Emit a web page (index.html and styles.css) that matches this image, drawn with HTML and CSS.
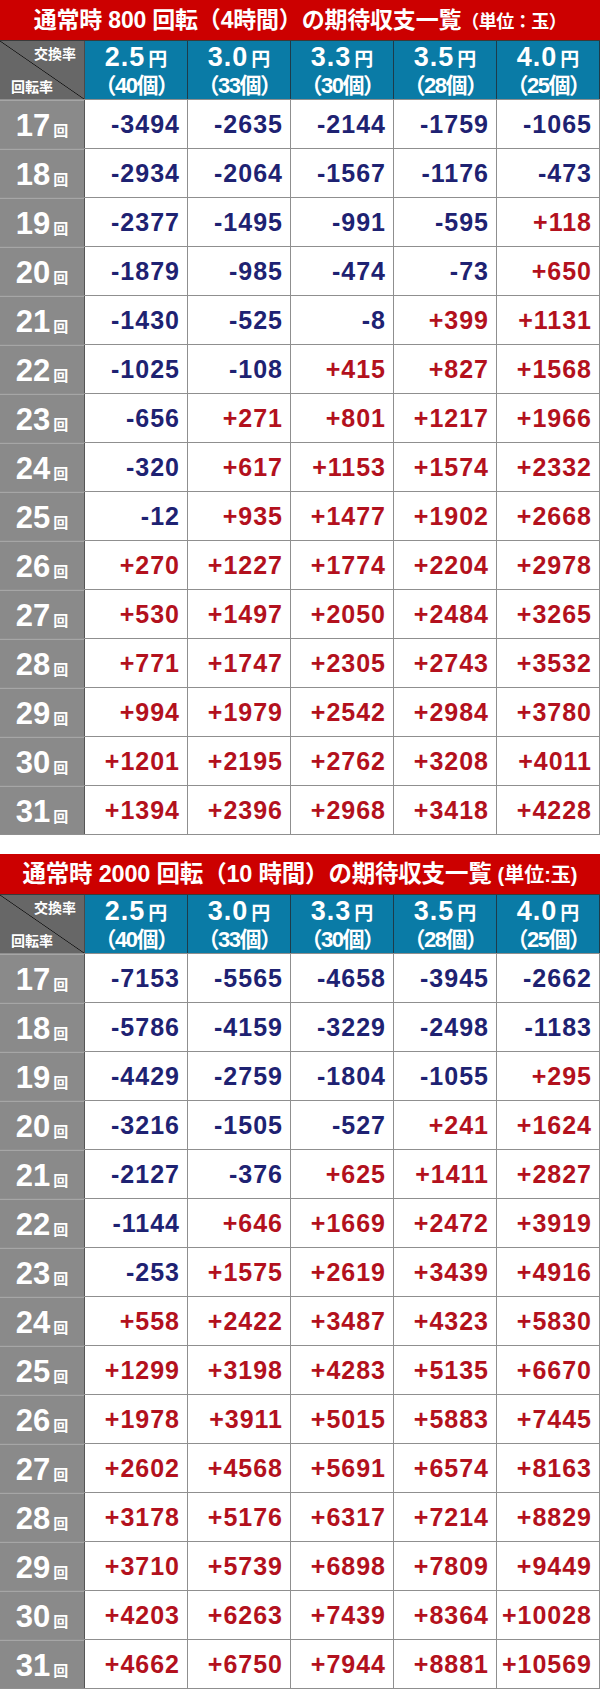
FILE: index.html
```html
<!DOCTYPE html>
<html lang="ja">
<head>
<meta charset="utf-8">
<title>期待収支一覧</title>
<link rel="stylesheet" href="styles.css">
</head>
<body>
<section class="sheet">
  <h2 class="title">通常時 800 回転（4時間）の期待収支一覧<span class="unit">（単位：玉）</span></h2>
  <div class="grid">
    <div class="corner"><span class="c-top">交換率</span><span class="c-bot">回転率</span></div>
    <div class="rate"><div class="r1">2.5<span class="yen">円</span></div><div class="r2">（40個）</div></div>
    <div class="rate"><div class="r1">3.0<span class="yen">円</span></div><div class="r2">（33個）</div></div>
    <div class="rate"><div class="r1">3.3<span class="yen">円</span></div><div class="r2">（30個）</div></div>
    <div class="rate"><div class="r1">3.5<span class="yen">円</span></div><div class="r2">（28個）</div></div>
    <div class="rate"><div class="r1">4.0<span class="yen">円</span></div><div class="r2">（25個）</div></div>

    <div class="rot">17<span class="kai">回</span></div><div class="v neg">-3494</div><div class="v neg">-2635</div><div class="v neg">-2144</div><div class="v neg">-1759</div><div class="v neg">-1065</div>
    <div class="rot">18<span class="kai">回</span></div><div class="v neg">-2934</div><div class="v neg">-2064</div><div class="v neg">-1567</div><div class="v neg">-1176</div><div class="v neg">-473</div>
    <div class="rot">19<span class="kai">回</span></div><div class="v neg">-2377</div><div class="v neg">-1495</div><div class="v neg">-991</div><div class="v neg">-595</div><div class="v pos">+118</div>
    <div class="rot">20<span class="kai">回</span></div><div class="v neg">-1879</div><div class="v neg">-985</div><div class="v neg">-474</div><div class="v neg">-73</div><div class="v pos">+650</div>
    <div class="rot">21<span class="kai">回</span></div><div class="v neg">-1430</div><div class="v neg">-525</div><div class="v neg">-8</div><div class="v pos">+399</div><div class="v pos">+1131</div>
    <div class="rot">22<span class="kai">回</span></div><div class="v neg">-1025</div><div class="v neg">-108</div><div class="v pos">+415</div><div class="v pos">+827</div><div class="v pos">+1568</div>
    <div class="rot">23<span class="kai">回</span></div><div class="v neg">-656</div><div class="v pos">+271</div><div class="v pos">+801</div><div class="v pos">+1217</div><div class="v pos">+1966</div>
    <div class="rot">24<span class="kai">回</span></div><div class="v neg">-320</div><div class="v pos">+617</div><div class="v pos">+1153</div><div class="v pos">+1574</div><div class="v pos">+2332</div>
    <div class="rot">25<span class="kai">回</span></div><div class="v neg">-12</div><div class="v pos">+935</div><div class="v pos">+1477</div><div class="v pos">+1902</div><div class="v pos">+2668</div>
    <div class="rot">26<span class="kai">回</span></div><div class="v pos">+270</div><div class="v pos">+1227</div><div class="v pos">+1774</div><div class="v pos">+2204</div><div class="v pos">+2978</div>
    <div class="rot">27<span class="kai">回</span></div><div class="v pos">+530</div><div class="v pos">+1497</div><div class="v pos">+2050</div><div class="v pos">+2484</div><div class="v pos">+3265</div>
    <div class="rot">28<span class="kai">回</span></div><div class="v pos">+771</div><div class="v pos">+1747</div><div class="v pos">+2305</div><div class="v pos">+2743</div><div class="v pos">+3532</div>
    <div class="rot">29<span class="kai">回</span></div><div class="v pos">+994</div><div class="v pos">+1979</div><div class="v pos">+2542</div><div class="v pos">+2984</div><div class="v pos">+3780</div>
    <div class="rot">30<span class="kai">回</span></div><div class="v pos">+1201</div><div class="v pos">+2195</div><div class="v pos">+2762</div><div class="v pos">+3208</div><div class="v pos">+4011</div>
    <div class="rot">31<span class="kai">回</span></div><div class="v pos">+1394</div><div class="v pos">+2396</div><div class="v pos">+2968</div><div class="v pos">+3418</div><div class="v pos">+4228</div>
  </div>
</section>

<section class="sheet">
  <h2 class="title title-wide">通常時 2000 回転（10 時間）の期待収支一覧<span class="unit unit-narrow">(単位:玉)</span></h2>
  <div class="grid">
    <div class="corner"><span class="c-top">交換率</span><span class="c-bot">回転率</span></div>
    <div class="rate"><div class="r1">2.5<span class="yen">円</span></div><div class="r2">（40個）</div></div>
    <div class="rate"><div class="r1">3.0<span class="yen">円</span></div><div class="r2">（33個）</div></div>
    <div class="rate"><div class="r1">3.3<span class="yen">円</span></div><div class="r2">（30個）</div></div>
    <div class="rate"><div class="r1">3.5<span class="yen">円</span></div><div class="r2">（28個）</div></div>
    <div class="rate"><div class="r1">4.0<span class="yen">円</span></div><div class="r2">（25個）</div></div>

    <div class="rot">17<span class="kai">回</span></div><div class="v neg">-7153</div><div class="v neg">-5565</div><div class="v neg">-4658</div><div class="v neg">-3945</div><div class="v neg">-2662</div>
    <div class="rot">18<span class="kai">回</span></div><div class="v neg">-5786</div><div class="v neg">-4159</div><div class="v neg">-3229</div><div class="v neg">-2498</div><div class="v neg">-1183</div>
    <div class="rot">19<span class="kai">回</span></div><div class="v neg">-4429</div><div class="v neg">-2759</div><div class="v neg">-1804</div><div class="v neg">-1055</div><div class="v pos">+295</div>
    <div class="rot">20<span class="kai">回</span></div><div class="v neg">-3216</div><div class="v neg">-1505</div><div class="v neg">-527</div><div class="v pos">+241</div><div class="v pos">+1624</div>
    <div class="rot">21<span class="kai">回</span></div><div class="v neg">-2127</div><div class="v neg">-376</div><div class="v pos">+625</div><div class="v pos">+1411</div><div class="v pos">+2827</div>
    <div class="rot">22<span class="kai">回</span></div><div class="v neg">-1144</div><div class="v pos">+646</div><div class="v pos">+1669</div><div class="v pos">+2472</div><div class="v pos">+3919</div>
    <div class="rot">23<span class="kai">回</span></div><div class="v neg">-253</div><div class="v pos">+1575</div><div class="v pos">+2619</div><div class="v pos">+3439</div><div class="v pos">+4916</div>
    <div class="rot">24<span class="kai">回</span></div><div class="v pos">+558</div><div class="v pos">+2422</div><div class="v pos">+3487</div><div class="v pos">+4323</div><div class="v pos">+5830</div>
    <div class="rot">25<span class="kai">回</span></div><div class="v pos">+1299</div><div class="v pos">+3198</div><div class="v pos">+4283</div><div class="v pos">+5135</div><div class="v pos">+6670</div>
    <div class="rot">26<span class="kai">回</span></div><div class="v pos">+1978</div><div class="v pos">+3911</div><div class="v pos">+5015</div><div class="v pos">+5883</div><div class="v pos">+7445</div>
    <div class="rot">27<span class="kai">回</span></div><div class="v pos">+2602</div><div class="v pos">+4568</div><div class="v pos">+5691</div><div class="v pos">+6574</div><div class="v pos">+8163</div>
    <div class="rot">28<span class="kai">回</span></div><div class="v pos">+3178</div><div class="v pos">+5176</div><div class="v pos">+6317</div><div class="v pos">+7214</div><div class="v pos">+8829</div>
    <div class="rot">29<span class="kai">回</span></div><div class="v pos">+3710</div><div class="v pos">+5739</div><div class="v pos">+6898</div><div class="v pos">+7809</div><div class="v pos">+9449</div>
    <div class="rot">30<span class="kai">回</span></div><div class="v pos">+4203</div><div class="v pos">+6263</div><div class="v pos">+7439</div><div class="v pos">+8364</div><div class="v pos">+10028</div>
    <div class="rot">31<span class="kai">回</span></div><div class="v pos">+4662</div><div class="v pos">+6750</div><div class="v pos">+7944</div><div class="v pos">+8881</div><div class="v pos">+10569</div>
  </div>
</section>
</body>
</html>
```

FILE: styles.css
```css
html, body {
  margin: 0;
  padding: 0;
  background: #fff;
}
body {
  width: 600px;
  font-family: "Liberation Sans", "Noto Sans CJK JP", sans-serif;
  font-weight: 700;
}
.sheet {
  margin: 0 0 19px 0;
}
.title {
  margin: 0;
  height: 40px;
  background: #cc0000;
  border-bottom: 1px solid #3a3a3a;
  color: #fff;
  font-size: 23px;
  line-height: 40px;
  font-weight: 700;
  text-align: center;
  white-space: nowrap;
  letter-spacing: -0.2px;
}
.title-wide {
  font-size: 23.5px;
  letter-spacing: -0.2px;
}
.unit {
  font-size: 18px;
  letter-spacing: -0.5px;
}
.unit-narrow {
  font-size: 20px;
  letter-spacing: 0;
  margin-left: 6px;
}
.grid {
  display: grid;
  grid-template-columns: 84px repeat(5, 102px);
  grid-auto-rows: 48px;
  grid-template-rows: 58px;
  column-gap: 1px;
  row-gap: 1px;
  background: #8f8f8f;
  border-bottom: 1px solid #8f8f8f;
  padding-right: 1px;
}
.corner {
  display: flex;
  flex-direction: column;
  justify-content: space-between;
  padding: 6px 8px 5px 11px;
  background: linear-gradient(to top right, #676767 calc(50% - 0.7px), #151515 50%, #676767 calc(50% + 0.7px));
  color: #fff;
  font-size: 14px;
  line-height: 14px;
  box-shadow: 1px 0 0 #4a4a4a;
}
.c-top { align-self: flex-end; }
.c-bot { align-self: flex-start; }
.rate {
  display: flex;
  flex-direction: column;
  align-items: center;
  justify-content: center;
  background: #0a7ba6;
  color: #fff;
  box-shadow: 1px 0 0 #1d3b4a;
}
.rate:last-child { box-shadow: none; }
.r1 {
  font-size: 27px;
  line-height: 26px;
  letter-spacing: 1px;
  margin-top: 1px;
}
.yen {
  font-size: 19px;
  margin-left: 3px;
  letter-spacing: 0;
}
.r2 {
  font-size: 22px;
  line-height: 25px;
  letter-spacing: -1.5px;
}
.rot {
  display: flex;
  align-items: baseline;
  justify-content: center;
  padding-top: 9px;
  background: #8a8a8a;
  color: #fff;
  font-size: 31px;
  line-height: 34px;
  box-shadow: inset 0 1px 0 #a6a6a6, 1px 0 0 #555;
}
.kai {
  font-size: 15px;
  margin-left: 3px;
}
.v {
  display: flex;
  align-items: center;
  justify-content: flex-end;
  padding-right: 7px;
  background: #fff;
  font-size: 25px;
  letter-spacing: 1px;
}
.neg { color: #1e2272; }
.pos { color: #b3111d; }
```
